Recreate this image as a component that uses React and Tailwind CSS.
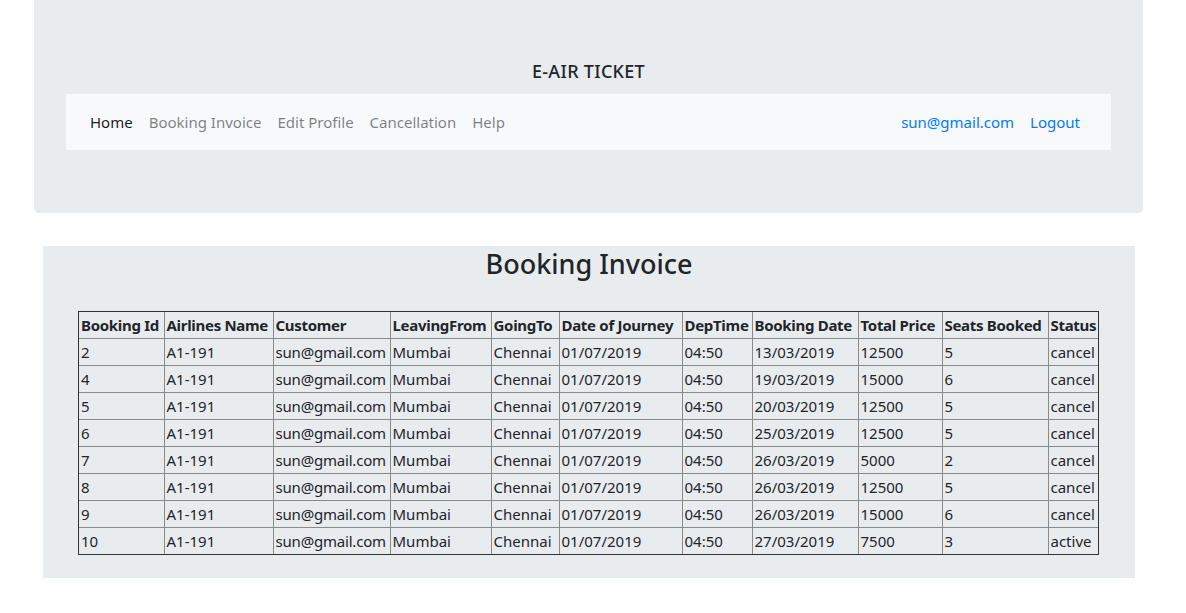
const rows = [
  ["2", "13/03/2019", "12500", "5", "cancel"],
  ["4", "19/03/2019", "15000", "6", "cancel"],
  ["5", "20/03/2019", "12500", "5", "cancel"],
  ["6", "25/03/2019", "12500", "5", "cancel"],
  ["7", "26/03/2019", "5000", "2", "cancel"],
  ["8", "26/03/2019", "12500", "5", "cancel"],
  ["9", "26/03/2019", "15000", "6", "cancel"],
  ["10", "27/03/2019", "7500", "3", "active"],
];

const headers = [
  ["Booking Id", 85],
  ["Airlines Name", 109],
  ["Customer", 117],
  ["LeavingFrom", 101],
  ["GoingTo", 68],
  ["Date of Journey", 123],
  ["DepTime", 70],
  ["Booking Date", 106],
  ["Total Price", 84],
  ["Seats Booked", 106],
  ["Status", 50],
];

const cell = "border border-[#8a8a8a] px-[2px] whitespace-nowrap";

export default function App() {
  return (
    <div
      className="min-h-screen bg-white text-[#212529]"
      style={{ fontFamily: '"Noto Sans", "Open Sans", sans-serif' }}
    >
      <div className="ml-[34px] w-[1109px] h-[213px] bg-[#e9ecef] rounded-b-[5px] pt-[58px] px-[32px]">
        <h2 className="text-center text-[18px] font-medium leading-[27px] tracking-[0.3px]">
          E-AIR TICKET
        </h2>
        <nav className="mt-[9px] h-[56px] bg-[#f8f9fa] flex items-center justify-between px-[16px] text-[15px]">
          <div className="flex items-center">
            <a className="px-[8px] text-black/90">Home</a>
            <a className="px-[8px] text-black/50">Booking Invoice</a>
            <a className="px-[8px] text-black/50">Edit Profile</a>
            <a className="px-[8px] text-black/50">Cancellation</a>
            <a className="px-[8px] text-black/50">Help</a>
          </div>
          <div className="flex items-center pr-[7px] text-[#007bff]">
            <a className="px-[8px]">sun@gmail.com</a>
            <a className="px-[8px]">Logout</a>
          </div>
        </nav>
      </div>

      <div className="ml-[43px] mt-[33px] w-[1092px] h-[332px] bg-[#e9ecef] px-[35px]">
        <h1 className="text-center text-[27px] font-medium leading-[36px]">
          Booking Invoice
        </h1>
        <div className="mt-[29px] w-fit border border-[#333]">
          <table className="border-collapse border-hidden table-fixed w-[1019px] text-[15px] leading-[26px]">
            <colgroup>
              {headers.map(([h, w]) => (
                <col key={h} style={{ width: w }} />
              ))}
            </colgroup>
            <thead>
              <tr>
                {headers.map(([h]) => (
                  <th
                    key={h}
                    className={`${cell} text-left font-bold overflow-hidden tracking-[-0.3px]`}
                  >
                    {h}
                  </th>
                ))}
              </tr>
            </thead>
            <tbody>
              {rows.map((r) => (
                <tr key={r[0]}>
                  <td className={cell}>{r[0]}</td>
                  <td className={cell}>A1-191</td>
                  <td className={`${cell} overflow-hidden tracking-[-0.2px]`}>sun@gmail.com</td>
                  <td className={cell}>Mumbai</td>
                  <td className={cell}>Chennai</td>
                  <td className={cell}>01/07/2019</td>
                  <td className={cell}>04:50</td>
                  <td className={cell}>{r[1]}</td>
                  <td className={cell}>{r[2]}</td>
                  <td className={cell}>{r[3]}</td>
                  <td className={cell}>{r[4]}</td>
                </tr>
              ))}
            </tbody>
          </table>
        </div>
      </div>
    </div>
  );
}
